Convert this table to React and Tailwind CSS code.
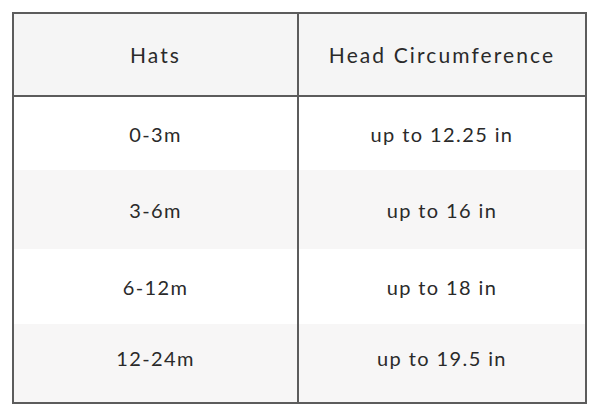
export default function App() {
  const rows = [
    ["0-3m", "up to 12.25 in", "bg-white", "h-[73px]", ""],
    ["3-6m", "up to 16 in", "bg-[#f7f6f6]", "h-[79px]", ""],
    ["6-12m", "up to 18 in", "bg-white", "h-[75px]", ""],
    ["12-24m", "up to 19.5 in", "bg-[#f7f6f6]", "h-[78px]", "pb-[10px]"],
  ];
  return (
    <div className="w-[600px] h-[418px] bg-white pt-[12px] pl-[12px]" style={{ fontFamily: "Lato, 'Open Sans', sans-serif" }}>
      <div className="w-[575px] border-2 border-[#5c5c5c] text-[#2a2a2a]">
        <div className="flex h-[83px] bg-[#f5f5f5] border-b-2 border-[#5c5c5c]">
          <div className="w-[285px] border-r-2 border-[#5c5c5c] flex items-center justify-center text-[21px] tracking-[0.1em]">Hats</div>
          <div className="flex-1 flex items-center justify-center text-[21px] tracking-[0.1em]">Head Circumference</div>
        </div>
        {rows.map(([a, b, bg, h, pad]) => (
          <div key={a} className={`flex ${bg} ${h}`}>
            <div className={`w-[285px] border-r-2 border-[#5c5c5c] flex items-center justify-center text-[20px] tracking-[0.07em] ${pad}`}>{a}</div>
            <div className={`flex-1 flex items-center justify-center text-[20px] tracking-[0.07em] ${pad}`}>{b}</div>
          </div>
        ))}
      </div>
    </div>
  );
}
